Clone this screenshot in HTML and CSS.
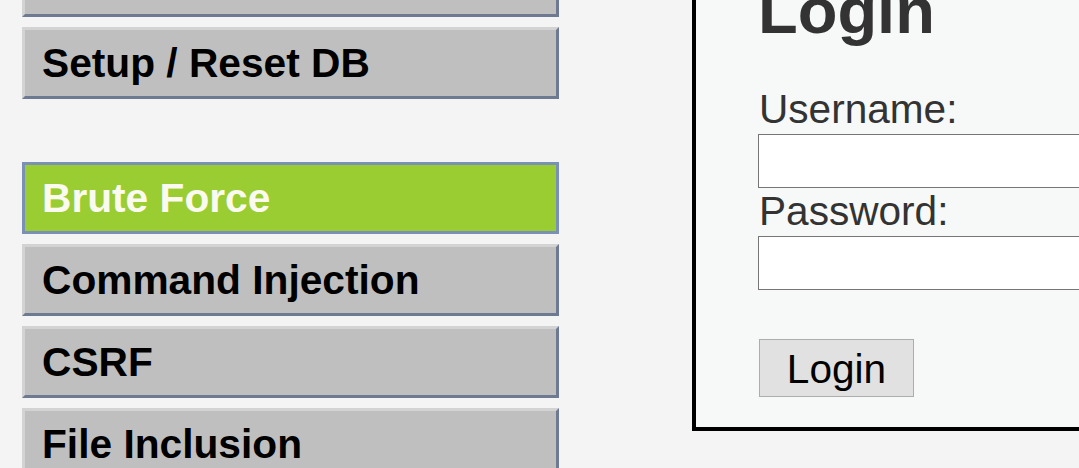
FILE: index.html
```html
<!DOCTYPE html>
<html>
<head>
<meta charset="utf-8">
<link rel="stylesheet" href="styles.css">
</head>
<body>
<div class="page">
  <nav class="menu">
    <ul class="menu-group first">
      <li class="menu-item">Instructions</li>
      <li class="menu-item">Setup / Reset DB</li>
    </ul>
    <ul class="menu-group">
      <li class="menu-item selected">Brute Force</li>
      <li class="menu-item">Command Injection</li>
      <li class="menu-item">CSRF</li>
      <li class="menu-item">File Inclusion</li>
    </ul>
  </nav>
  <main class="panel">
    <h1 class="title">Login</h1>
    <form class="form">
      <label class="label">Username:</label>
      <input class="field" type="text">
      <label class="label">Password:</label>
      <input class="field" type="password">
      <button class="btn" type="button">Login</button>
    </form>
  </main>
</div>
</body>
</html>
```
FILE: styles.css
```css
html, body {
  margin: 0;
  padding: 0;
  background: #f4f4f4;
  font-family: "Liberation Sans", Arial, sans-serif;
  overflow: hidden;
}
.page {
  display: flex;
  align-items: flex-start;
  width: 1079px;
  height: 468px;
}
.menu {
  margin-left: 22px;
  width: 537px;
  flex: none;
}
.menu-group {
  list-style: none;
  margin: 0;
  padding: 0;
  display: flex;
  flex-direction: column;
  gap: 10px;
}
.menu-group.first {
  margin-top: -55px;
  margin-bottom: 63px;
}
.menu-item {
  box-sizing: border-box;
  height: 72px;
  line-height: 66px;
  padding-left: 17px;
  background: #bfbfbf;
  border: 3px solid;
  border-color: #d3d3d3 #6e7a92 #6e7a92 #d3d3d3;
  font-size: 40.7px;
  font-weight: bold;
  color: #000;
  white-space: nowrap;
  overflow: hidden;
}
.menu-item.selected {
  background: #9acd32;
  border-color: #7b90b6;
  color: #fafaf0;
}
.panel {
  margin-left: 133px;
  margin-top: -30px;
  flex: 1;
  background: #f7f9f9;
  border: 4px solid #000;
  border-right: none;
  padding: 0 0 30px 62px;
}
.title {
  margin: 0 0 38px;
  font-size: 65px;
  line-height: 74px;
  font-weight: bold;
  color: #333;
}
.form {
  display: flex;
  flex-direction: column;
  align-items: flex-start;
}
.label {
  font-size: 40.6px;
  line-height: 46px;
  color: #333;
  margin-bottom: 2px;
  padding-left: 1px;
}
.field {
  box-sizing: border-box;
  width: 400px;
  height: 54px;
  margin: 0;
  border: 1px solid #767676;
  background: #fff;
}
.btn {
  box-sizing: border-box;
  margin-top: 49px;
  margin-left: 1px;
  width: 155px;
  height: 58px;
  padding: 5px 0 3px;
  font-family: "Liberation Sans", Arial, sans-serif;
  font-size: 40.6px;
  line-height: 46px;
  color: #000;
  background: #e1e1e1;
  border: 1px solid #adadad;
  border-radius: 0;
}
```
